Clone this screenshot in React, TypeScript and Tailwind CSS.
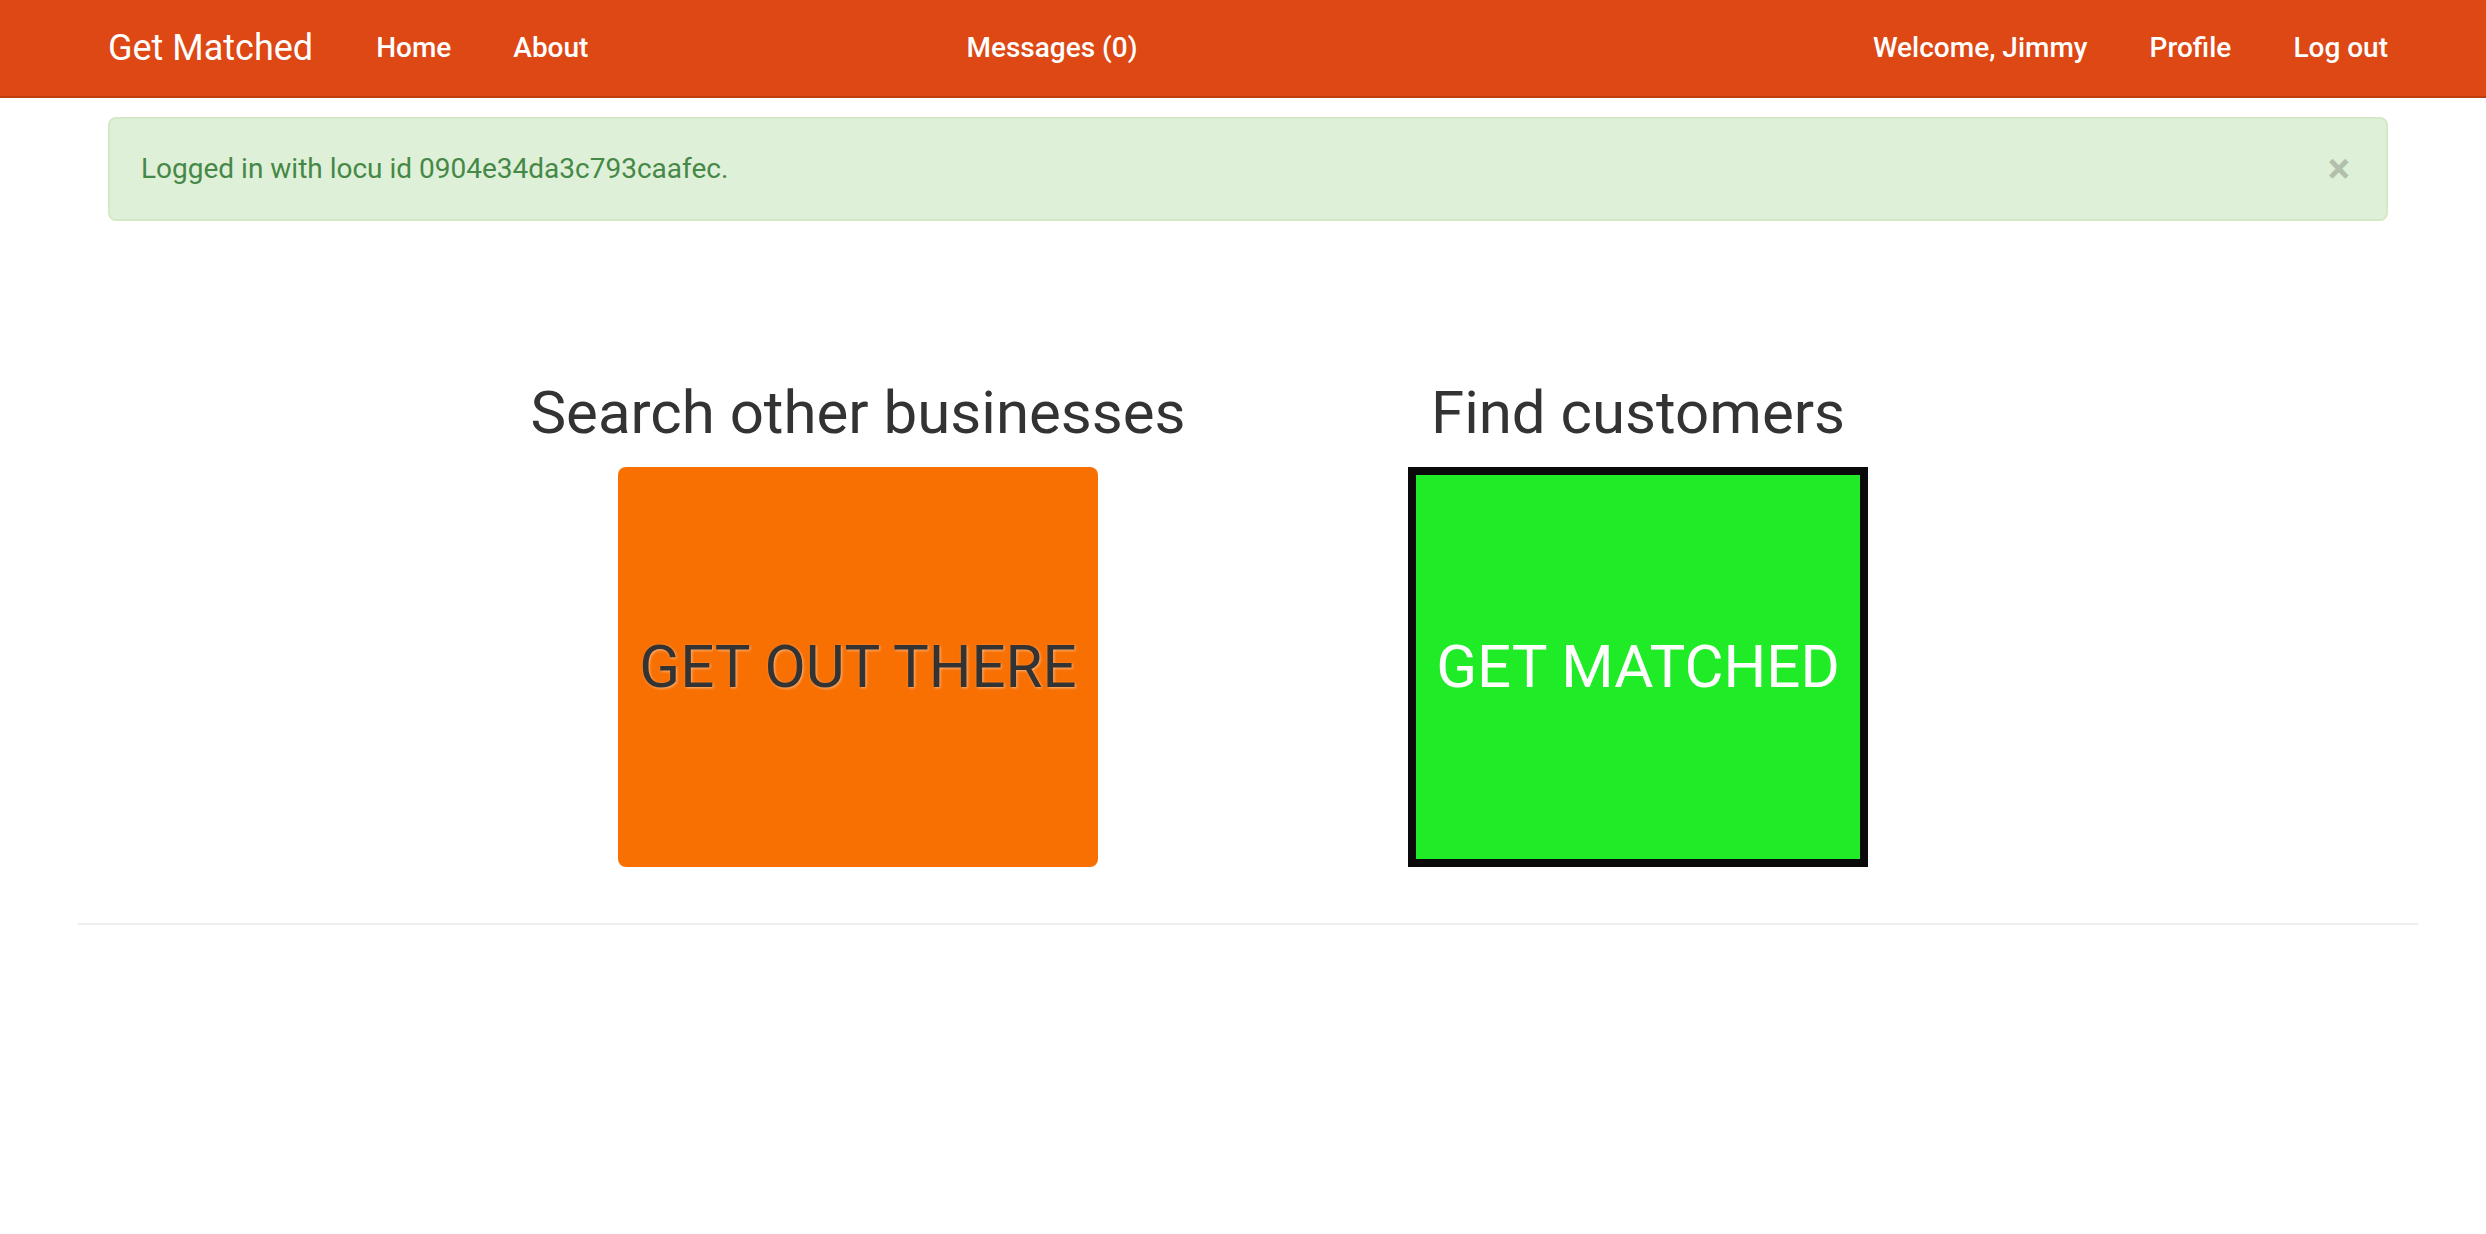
import React from 'react';

const font = { fontFamily: 'Roboto, "Open Sans", sans-serif' };

const NavLink = ({ label, className = '' }: { label: string; className?: string }) => (
  <a className={`text-[28px] font-medium text-white px-[30px] leading-[98px] ${className}`}>{label}</a>
);

export default function App() {
  return (
    <div className="min-h-[1234px] bg-white text-[#333]" style={font}>
      <nav className="h-[98px] bg-[#dd4814] border-b-2 border-[#bf3e11]">
        <div className="ml-[78px] w-[2340px] px-[30px] h-full flex items-center">
          <a className="text-[36px] text-white pr-[33px] leading-[96px]">Get Matched</a>
          <NavLink label="Home" />
          <NavLink label="About" className="pl-[32px]" />
          <NavLink label="Messages (0)" className="ml-[318px]" />
          <div className="flex-1" />
          <NavLink label="Welcome, Jimmy" className="pr-[32px]" />
          <NavLink label="Profile" className="pr-[32px]" />
          <NavLink label="Log out" className="pr-0" />
        </div>
      </nav>

      <div className="ml-[78px] w-[2340px] px-[30px]">
        <div className="mt-[19px] h-[104px] rounded-[8px] border-2 border-[#d6e9c6] bg-[#dff0d8] flex items-center justify-between pl-[31px] pr-[36px]">
          <span className="text-[28px] text-[#468847]">Logged in with locu id 0904e34da3c793caafec.</span>
          <span className="text-[42px] font-bold text-black opacity-20 leading-none">×</span>
        </div>
      </div>

      <div className="ml-[78px] w-[2340px] flex mt-[159px]">
        <div className="ml-[390px] w-[780px] flex flex-col items-center">
          <h2 className="text-[60px] leading-[66px] mb-[21px]">Search other businesses</h2>
          <div className="w-[480px] h-[400px] rounded-[8px] bg-[#f86f02] flex items-center justify-center">
            <span className="text-[60px] text-[#333] [text-shadow:1px_1px_3px_rgba(255,255,255,0.5)]">GET OUT THERE</span>
          </div>
        </div>
        <div className="w-[780px] flex flex-col items-center">
          <h2 className="text-[60px] leading-[66px] mb-[21px]">Find customers</h2>
          <div className="w-[460px] h-[400px] border-[8px] border-[#0a0a0a] bg-[#1fec26] flex items-center justify-center">
            <span className="text-[60px] text-white">GET MATCHED</span>
          </div>
        </div>
      </div>

      <div className="ml-[78px] w-[2340px] mt-[56px] border-t-2 border-[#eeeeee]" />
    </div>
  );
}
